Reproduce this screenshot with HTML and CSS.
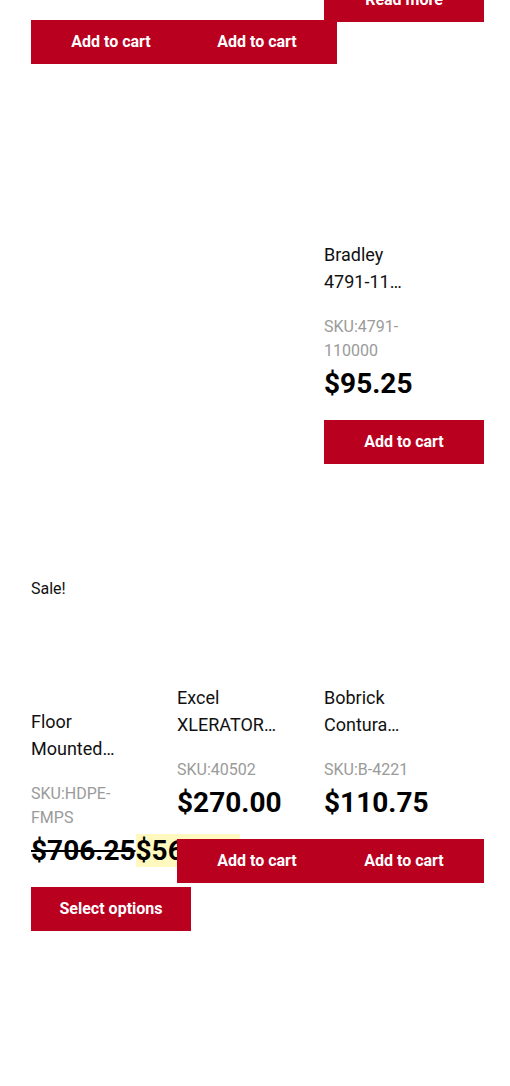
FILE: index.html
```html
<!DOCTYPE html>
<html lang="en">
<head>
<meta charset="utf-8">
<title>Products</title>
<link rel="stylesheet" href="styles.css">
</head>
<body>
<ul class="products">
  <li class="product">
    <div class="above"></div>
    <a class="button" href="#">Add to cart</a>
  </li>
  <li class="product">
    <div class="above"></div>
    <a class="button" href="#">Add to cart</a>
  </li>
  <li class="product">
    <a class="button" href="#">Read more</a>
  </li>

  <li class="product empty"></li>
  <li class="product empty"></li>
  <li class="product">
    <div class="thumb"></div>
    <h2 class="title">Bradley 4791-11 Soap Dispenser</h2>
    <div class="sku">SKU:4791-110000</div>
    <div class="price">$95.25</div>
    <a class="button" href="#">Add to cart</a>
  </li>

  <li class="product">
    <span class="onsale">Sale!</span>
    <div class="thumb"></div>
    <h2 class="title">Floor Mounted Partition System</h2>
    <div class="sku">SKU:HDPE-FMPS</div>
    <div class="price"><del>$706.25</del><ins>$565.00</ins></div>
    <a class="button" href="#">Select options</a>
  </li>
  <li class="product">
    <div class="thumb"></div>
    <h2 class="title">Excel XLERATOR Hand Dryer</h2>
    <div class="sku">SKU:40502</div>
    <div class="price">$270.00</div>
    <a class="button" href="#">Add to cart</a>
  </li>
  <li class="product">
    <div class="thumb"></div>
    <h2 class="title">Bobrick Contura Soap Dispenser</h2>
    <div class="sku">SKU:B-4221</div>
    <div class="price">$110.75</div>
    <a class="button" href="#">Add to cart</a>
  </li>
</ul>
</body>
</html>
```

FILE: styles.css
```css
html, body {
  margin: 0;
  padding: 0;
  background: #ffffff;
}

body {
  font-family: Roboto, "Liberation Sans", Arial, sans-serif;
  color: #000000;
  overflow: hidden;
}

.products {
  list-style: none;
  margin: -22px 0 0 31px;
  padding: 0;
  width: 440px;
  display: grid;
  grid-template-columns: 146px 147px 147px;
  row-gap: 70px;
  align-items: start;
}

.product {
  position: relative;
  display: flex;
  flex-direction: column;
  align-items: flex-start;
  min-width: 0;
}

.product.empty {
  height: 373px;
}

.above {
  height: 42px;
}

.thumb {
  height: 107px;
}

.onsale {
  font-size: 16px;
  line-height: 24px;
  color: #111111;
}

.title {
  margin: 0 0 20px;
  width: 106px;
  font-size: 18px;
  line-height: 27px;
  font-weight: 400;
  color: #111111;
  display: -webkit-box;
  -webkit-line-clamp: 2;
  -webkit-box-orient: vertical;
  overflow: hidden;
}

.sku {
  width: 106px;
  font-size: 16px;
  line-height: 24px;
  color: #9a9a9a;
}

.price {
  margin-top: 4px;
  font-size: 28px;
  line-height: 34px;
  font-weight: 700;
  white-space: nowrap;
}

.price del {
  text-decoration: line-through;
}

.price ins {
  text-decoration: none;
  background: #fff9c0;
}

.button {
  display: block;
  margin-top: 19px;
  width: 160px;
  height: 44px;
  line-height: 44px;
  background: #b9001f;
  color: #ffffff;
  text-align: center;
  text-decoration: none;
  font-size: 16px;
  font-weight: 700;
}

.above + .button,
.product > .button:first-child {
  margin-top: 0;
}
```
